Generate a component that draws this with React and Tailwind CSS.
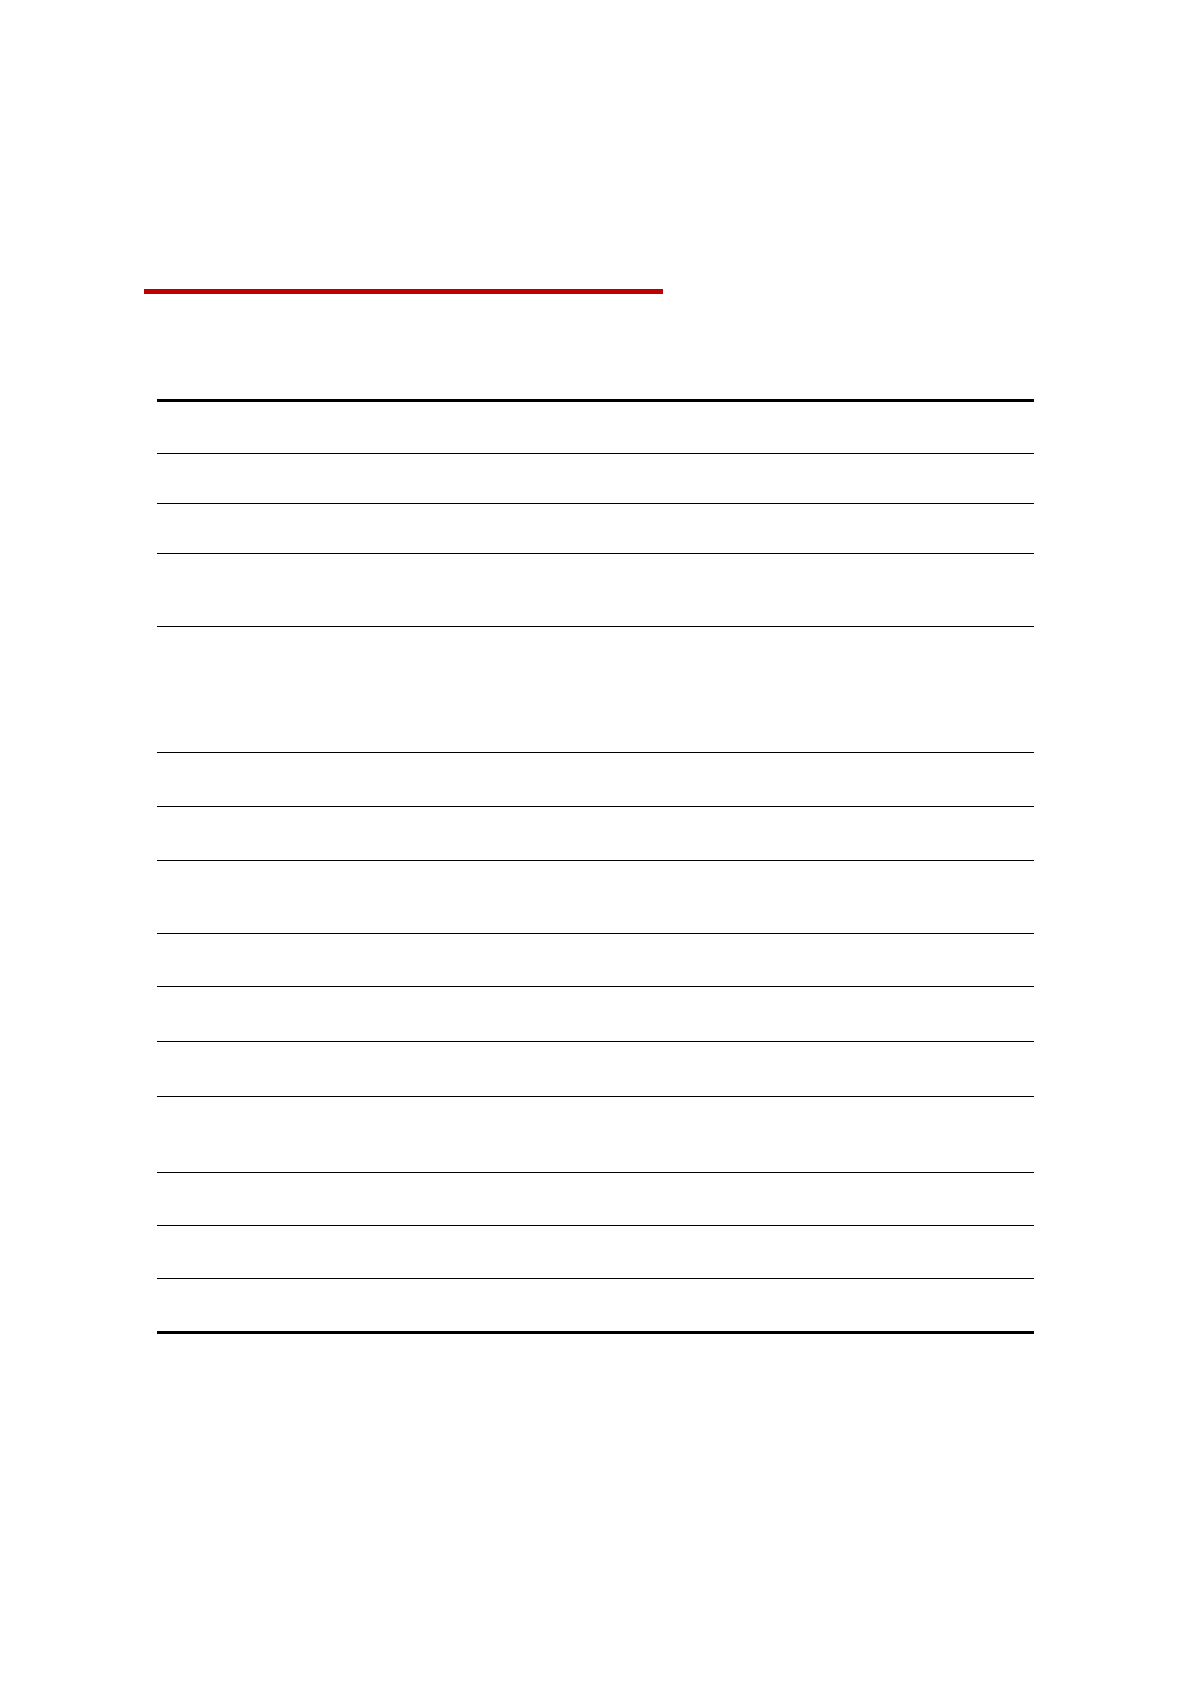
export default function App() {
  const rows = [52, 50, 50, 73, 126, 54, 54, 73, 53, 55, 55, 76, 53, 53, 52];
  return (
    <div className="w-[1191px] h-[1684px] bg-white font-['Liberation_Sans',sans-serif]">
      <div className="pt-[289px] pl-[144px]">
        <div className="w-[519px] h-[5px] bg-[#c00000]" />
      </div>
      <div className="mt-[105px] ml-[157px] w-[877px] border-t-[3px] border-b-[3px] border-black">
        {rows.map((h, i) => (
          <div
            key={i}
            style={{ height: h }}
            className={i < rows.length - 1 ? "border-b border-black" : ""}
          />
        ))}
      </div>
    </div>
  );
}
